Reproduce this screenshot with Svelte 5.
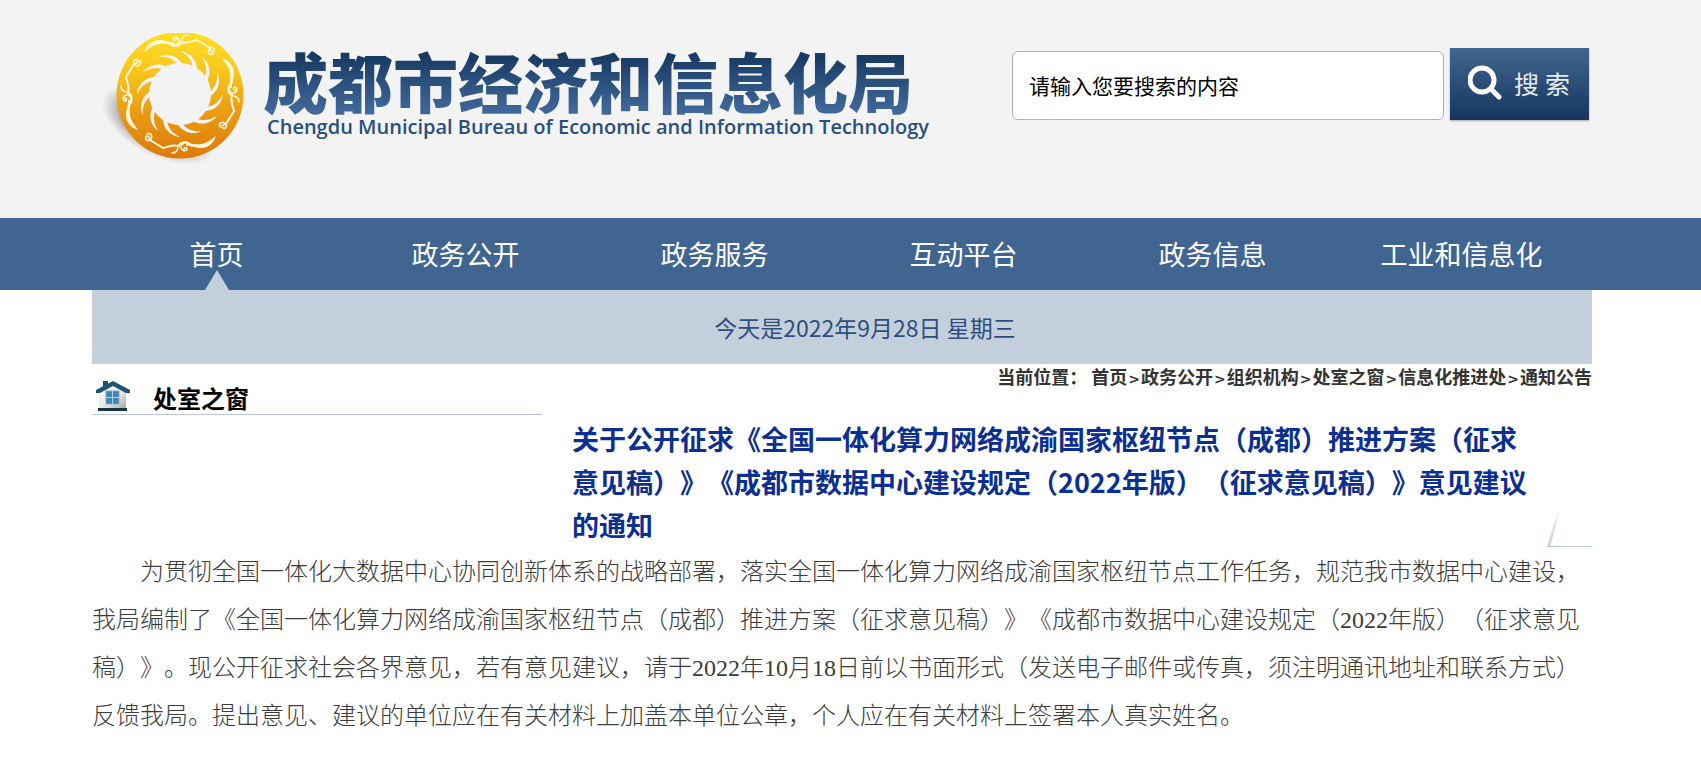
<script lang="ts">
  const navItems = ['首页', '政务公开', '政务服务', '互动平台', '政务信息', '工业和信息化'];
  const crumbs = ['首页', '政务公开', '组织机构', '处室之窗', '信息化推进处', '通知公告'];
  const blades = Array.from({ length: 12 }, (_, i) => i * 30);
  const birds = [0, 90, 180, 270];

  let keyword = $state('请输入您要搜索的内容');
  let active = $state(0);
</script>

<header class="band header">
  <div class="wrap header-inner">
    <a class="brand" href="/">
      <svg class="emblem" viewBox="-78 -61 146 130" aria-hidden="true">
        <defs>
          <linearGradient id="gold" x1="0" y1="0" x2="0" y2="1">
            <stop offset="0" stop-color="#ffdf24" />
            <stop offset="0.3" stop-color="#f8c81c" />
            <stop offset="0.65" stop-color="#e99a12" />
            <stop offset="1" stop-color="#dc7a06" />
          </linearGradient>
          <radialGradient id="shade">
            <stop offset="0.4" stop-color="#4a3c28" stop-opacity="0.9" />
            <stop offset="0.75" stop-color="#6b6255" stop-opacity="0.35" />
            <stop offset="1" stop-color="#8a857c" stop-opacity="0" />
          </radialGradient>
        </defs>
        <ellipse cx="-22" cy="31" rx="62" ry="31" transform="rotate(28 -22 31)" fill="url(#shade)" />
        <circle cy="1" r="63.5" fill="url(#gold)" />
        <g fill="#f3f3f3">
          <circle r="31" />
          {#each blades as angle}
            <path transform="rotate({angle})" d="M0 -43C9 -42 16 -36 17 -26L22 -16L6 -26L13 -26C12 -34 8 -39 0 -43Z" />
          {/each}
        </g>
        {#each birds as angle}
          <g transform="rotate({angle})" fill="none" stroke="#fff6dc" stroke-width="1.6" stroke-linecap="round">
            <path d="M-36 -42C-34 -49 -27 -55 -20 -54C-14 -54 -12 -51 -6 -52L-6 -50C-12 -49 -15 -51 -21 -50C-28 -49 -31 -45 -36 -42Z" fill="#fff6dc" stroke="none" />
            <path d="M-12 -52C-7 -46 0 -48 1 -52C8 -50 12 -53 17 -54L30 -46" stroke-width="2" />
            <path d="M-9 -50C-5 -47 -1 -50 -1 -53C-1 -57 -6 -58 -7 -55C-7 -53 -4 -53 -4 -55M2 -54C3 -58 5 -59 8 -59" />
            <path d="M30 -46C35 -48 35 -43 33 -42M30 -46C26 -42 30 -38 33 -40M30 -45L32 -42" />
          </g>
        {/each}
      </svg>
      <span class="brand-text">
        <span class="brand-cn">成都市经济和信息化局</span>
        <span class="brand-en">Chengdu Municipal Bureau of Economic and Information Technology</span>
      </span>
    </a>

    <form class="search" onsubmit={(e) => e.preventDefault()}>
      <input type="text" aria-label="搜索" bind:value={keyword} />
      <button type="submit">
        <svg viewBox="0 0 34 36" aria-hidden="true">
          <ellipse cx="14" cy="15" rx="12" ry="12" fill="none" stroke="#fff" stroke-width="5" />
          <path d="M23 24L31 32" stroke="#fff" stroke-width="5" stroke-linecap="round" />
        </svg>
        <span>搜</span><span>索</span>
      </button>
    </form>
  </div>
</header>

<nav class="band nav">
  <ul class="wrap">
    {#each navItems as item, i}
      <li><a href="#nav" class:active={active === i} onclick={() => (active = i)}>{item}</a></li>
    {/each}
  </ul>
</nav>

<main class="band">
  <div class="wrap">
    <div class="today">今天是2022年9月28日 星期三</div>

    <div class="columns">
      <aside>
        <h2>
          <svg viewBox="0 0 36 32" aria-hidden="true">
            <defs>
              <linearGradient id="wall" x1="0" y1="0" x2="1" y2="1">
                <stop offset="0" stop-color="#fff" />
                <stop offset="0.6" stop-color="#e6e6e6" />
                <stop offset="1" stop-color="#a9a9a9" />
              </linearGradient>
            </defs>
            <path d="M4 12L18 4L31 12V28H4Z" fill="url(#wall)" />
            <path d="M8 1H13V6L8 9Z" fill="#24506e" />
            <path d="M1 10L18 1L35 10V13H31L18 6L5 13H1Z" fill="#1d5273" />
            <path d="M11 11H24V24H11Z" fill="#3f86b8" stroke="#86a9bf" stroke-width="1" />
            <path d="M17.5 11V24M11 17.5H24" stroke="#b5d2e4" stroke-width="1" />
            <path d="M3 28H32V31H3Z" fill="#173347" />
          </svg>
          处室之窗
        </h2>
      </aside>

      <section class="headline">
        <div class="crumbs">
          <span class="crumbs-label">当前位置：</span>
          {#each crumbs as crumb, i}{#if i > 0}<span class="sep">&gt;</span>{/if}<a href="#crumb">{crumb}</a>{/each}
        </div>
        <h1>关于公开征求《全国一体化算力网络成渝国家枢纽节点（成都）推进方案（征求意见稿）》《成都市数据中心建设规定（2022年版）（征求意见稿）》意见建议的通知</h1>
        <svg class="corner" viewBox="0 0 45 40" aria-hidden="true">
          <defs>
            <linearGradient id="fade" x1="0" y1="1" x2="0" y2="0">
              <stop offset="0" stop-color="#c3cce4" />
              <stop offset="1" stop-color="#c3cce4" stop-opacity="0" />
            </linearGradient>
          </defs>
          <path d="M0 39L11 0H14L3 39Z" fill="url(#fade)" />
          <path d="M0 38H45V39H0Z" fill="#b9c4df" />
        </svg>
      </section>
    </div>

    <article>
      <p>为贯彻全国一体化大数据中心协同创新体系的战略部署，落实全国一体化算力网络成渝国家枢纽节点工作任务，规范我市数据中心建设，我局编制了《全国一体化算力网络成渝国家枢纽节点（成都）推进方案（征求意见稿）》《成都市数据中心建设规定（2022年版）（征求意见稿）》。现公开征求社会各界意见，若有意见建议，请于2022年10月18日前以书面形式（发送电子邮件或传真，须注明通讯地址和联系方式）反馈我局。提出意见、建议的单位应在有关材料上加盖本单位公章，个人应在有关材料上签署本人真实姓名。</p>
    </article>
  </div>
</main>

<style>
  :global(body) { background:#fff; font-family:"Noto Sans CJK SC", "Noto Sans", sans-serif; text-spacing-trim:space-all; }
  a { color:inherit; text-decoration:none; }

  .band { padding-right:17px; }
  .wrap { max-width:1500px; margin:0 auto; }

  .header { background:#f3f3f3; }
  .header-inner { display:flex; justify-content:space-between; align-items:flex-start; min-height:218px; }
  .brand { display:flex; padding-top:33px; padding-left:10px; }
  .emblem { width:146px; height:130px; }
  .brand-text { display:flex; flex-direction:column; padding-top:13px; padding-left:15px; }
  .brand-cn { font-size:65px; line-height:69px; font-weight:900; white-space:nowrap; background:linear-gradient(#183b63 15%, #40689a 95%); background-clip:text; color:transparent; }
  .brand-en { padding-left:4px; font-family:"Open Sans", sans-serif; font-size:20px; line-height:24px; font-weight:600; color:#27507f; white-space:nowrap; }

  .search { display:flex; align-items:flex-start; gap:6px; padding-top:48px; padding-right:3px; }
  .search input { box-sizing:border-box; width:432px; height:69px; margin-top:3px; padding:0 16px 2px; border:1px solid #b1b1b1; border-radius:6px; background:#fff; font-family:inherit; font-size:21px; color:#000; }
  .search button { display:flex; align-items:center; gap:6px; width:139px; height:72px; padding:0 18px 2px; border:0; background:linear-gradient(#40668f, #15365f); box-shadow:0 1px 2px rgba(0,0,0,.3); font-family:inherit; font-size:25px; line-height:36px; color:#e6edf5; }
  .search button svg { width:34px; height:36px; margin-right:6px; flex:none; }

  .nav { background:#3f6590; }
  .nav ul { display:grid; grid-template-columns:repeat(6, 1fr) 6px; padding:0; list-style:none; }
  .nav a { position:relative; display:block; font-size:27px; line-height:72px; text-align:center; color:#fff; }
  .nav a.active::after { content:''; position:absolute; left:50%; bottom:0; margin-left:-12px; border:12px solid transparent; border-top:0; border-bottom:20px solid #c4cfdc; }

  .today { padding-left:46px; background:#c4cfdc; font-size:23px; line-height:74px; text-align:center; color:#2d4f7f; }

  .columns { display:grid; grid-template-columns:450px 1fr; }
  aside h2 { display:flex; align-items:flex-end; gap:22px; height:50px; margin:0; padding-left:3px; border-bottom:1px solid #b9c4df; font-size:24px; line-height:32px; }
  aside svg { width:36px; height:32px; margin-bottom:2px; }

  .headline { position:relative; padding-left:30px; }
  .crumbs { height:24px; margin-bottom:29px; font-size:18px; line-height:24px; font-weight:700; text-align:right; color:#333; }
  .sep { padding:0 1px; font-family:"DejaVu Sans", sans-serif; font-size:14px; line-height:1; }
  h1 { max-width:960px; margin:0 0 2px; font-size:27px; line-height:43px; color:#0b3091; }
  .corner { position:absolute; right:0; bottom:0; width:45px; height:40px; }

  article p { margin:0; font-family:"Liberation Serif", "Noto Sans CJK SC", serif; font-size:24px; line-height:48px; font-weight:300; text-indent:2em; color:#3c3c3c; }
</style>
